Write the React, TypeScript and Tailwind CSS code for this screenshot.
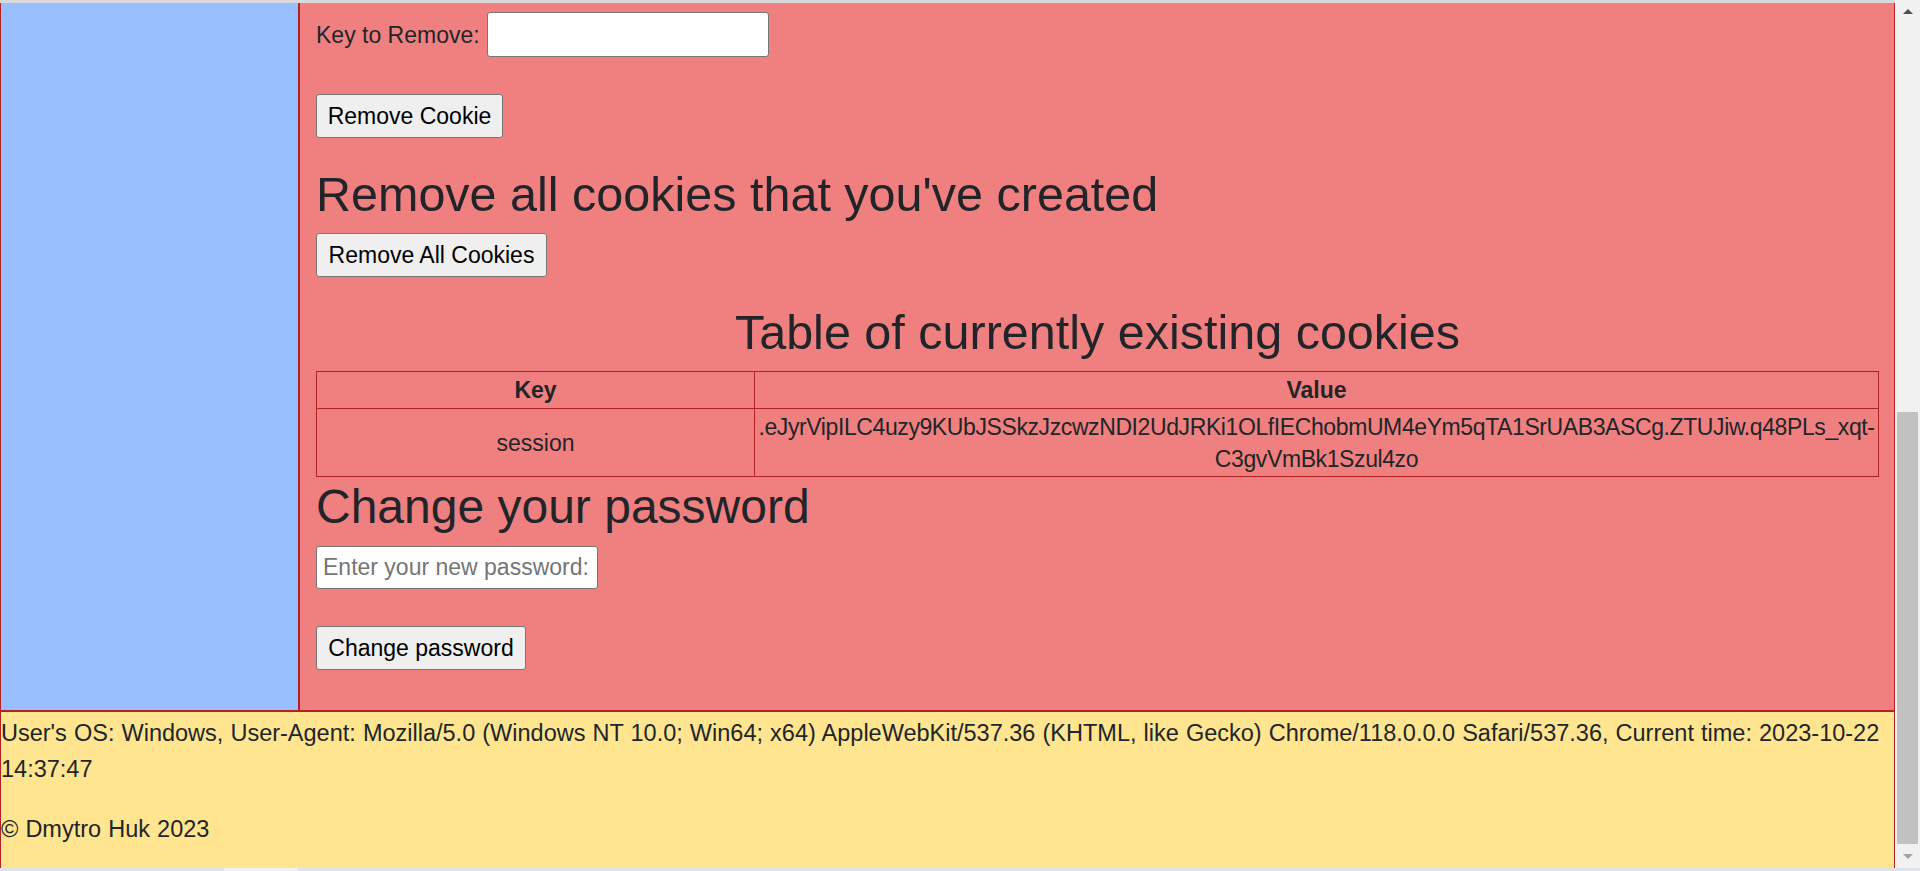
import React from 'react'

const sessionFirst =
  '.eJyrVipILC4uzy9KUbJSSkzJzcwzNDI2UdJRKi1OLfIEChobmUM4eYm5qTA1SrUAB3ASCg.ZTUJiw.q48PLs_xqt-'
const sessionSecond = 'C3gvVmBk1Szul4zo'

const Button = ({ label, width }: { label: string; width: string }) => (
  <button
    className={`${width} h-[44px] bg-[#efefef] border border-[#767676] rounded-[3px] text-[23px] text-black leading-none`}
  >
    {label}
  </button>
)

const Scrollbar = () => (
  <div className="w-[25px] h-[868px] bg-[#f1f1f1] flex flex-col items-center">
    <div className="h-[22px] flex items-center justify-center">
      <div className="w-0 h-0 border-l-[5px] border-r-[5px] border-b-[5px] border-l-transparent border-r-transparent border-b-[#505050]" />
    </div>
    <div className="h-[390px]" />
    <div className="w-[21px] h-[432px] bg-[#c1c1c1]" />
    <div className="h-[24px] flex items-center justify-center">
      <div className="w-0 h-0 border-l-[5px] border-r-[5px] border-t-[5px] border-l-transparent border-r-transparent border-t-[#a3a3a3]" />
    </div>
  </div>
)

const App = () => {
  return (
    <div className="w-[1920px] h-[871px] overflow-hidden flex flex-col font-['Liberation_Sans',Arial,sans-serif] text-[#212529]">
      <div className="flex">
        <div className="w-[1895px] flex flex-col">
          <div className="h-[3px] bg-[#d9d9d9]" />
          <div className="flex h-[707px] border-l border-r border-[#b22222]">
            <div className="w-[299px] bg-[#99bfff] border-r-2 border-[#b22222]" />
            <div className="flex-1 bg-[#f08080] pl-[16px] pr-[15px] text-[23px] leading-[36px]">
              <div className="mt-[9px] flex items-center h-[45px]">
                <span>Key to Remove:</span>
                <input
                  type="text"
                  className="ml-[7px] w-[282px] h-[45px] bg-white border border-[#767676] rounded-[3px]"
                />
              </div>
              <div className="mt-[37px]">
                <Button label="Remove Cookie" width="w-[187px]" />
              </div>
              <h2 className="mt-[27px] mb-[10px] text-[48.5px] leading-[58px] font-normal">
                Remove all cookies that you've created
              </h2>
              <Button label="Remove All Cookies" width="w-[231px]" />
              <h2 className="mt-[26px] mb-[10px] text-[48.5px] leading-[58px] font-normal text-center">
                Table of currently existing cookies
              </h2>
              <table className="w-full table-fixed border-collapse">
                <colgroup>
                  <col className="w-[438px]" />
                  <col />
                </colgroup>
                <thead>
                  <tr>
                    <th className="border border-[#b22222] h-[36px] font-bold">Key</th>
                    <th className="border border-[#b22222] h-[36px] font-bold">Value</th>
                  </tr>
                </thead>
                <tbody>
                  <tr>
                    <td className="border border-[#b22222] h-[68px] text-center">session</td>
                    <td className="border border-[#b22222] h-[68px] text-center leading-[32px] whitespace-nowrap tracking-[-0.4px]">
                      {sessionFirst}
                      <br />
                      {sessionSecond}
                    </td>
                  </tr>
                </tbody>
              </table>
              <h2 className="mt-[1px] mb-[10px] text-[48px] leading-[58px] font-normal">
                Change your password
              </h2>
              <input
                type="password"
                placeholder="Enter your new password:"
                className="w-[282px] h-[43px] bg-white border border-[#767676] rounded-[3px] px-[6px] text-[23px] placeholder:text-[#757575]"
              />
              <div className="mt-[37px]">
                <Button label="Change password" width="w-[210px]" />
              </div>
            </div>
          </div>
          <div className="h-[158px] bg-[#ffe58f] border-t-2 border-l border-r border-[#b22222] pt-[3px] text-[23.5px] leading-[36px] [word-spacing:0.55px]">
            <p className="mb-[24px] whitespace-nowrap">
              User's OS: Windows, User-Agent: Mozilla/5.0 (Windows NT 10.0; Win64; x64) AppleWebKit/537.36 (KHTML, like Gecko) Chrome/118.0.0.0 Safari/537.36, Current time: 2023-10-22
              <br />
              14:37:47
            </p>
            <p>© Dmytro Huk 2023</p>
          </div>
        </div>
        <Scrollbar />
      </div>
      <div className="h-[3px] flex bg-[#dfe2e7]">
        <div className="w-[224px]" />
        <div className="w-[74px] bg-[#f0f0f0]" />
      </div>
    </div>
  )
}

export default App
